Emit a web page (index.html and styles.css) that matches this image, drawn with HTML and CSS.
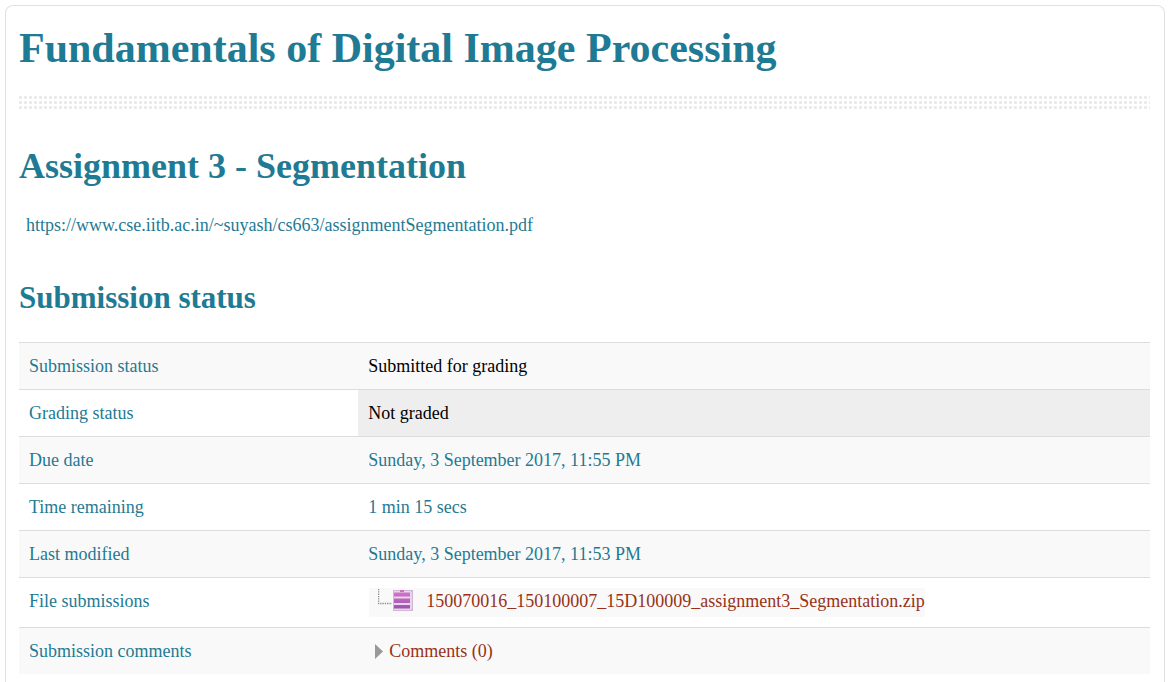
FILE: index.html
```html
<!DOCTYPE html>
<html lang="en">
<head>
<meta charset="utf-8">
<title>Assignment 3 - Segmentation</title>
<link rel="stylesheet" href="styles.css">
</head>
<body>
<main class="card">
  <h1 class="course-title">Fundamentals of Digital Image Processing</h1>
  <svg class="divider" aria-hidden="true">
    <defs>
      <pattern id="dots" width="5" height="5" patternUnits="userSpaceOnUse">
        <rect width="3" height="3" fill="#ededed"/>
        <rect x="1" y="1" width="1" height="1" fill="#e2e2e2"/>
      </pattern>
    </defs>
    <rect width="100%" height="100%" fill="url(#dots)"/>
  </svg>
  <h2 class="assignment-title">Assignment 3 - Segmentation</h2>
  <p class="intro"><a class="intro-link" href="https://www.cse.iitb.ac.in/~suyash/cs663/assignmentSegmentation.pdf">https://www.cse.iitb.ac.in/~suyash/cs663/assignmentSegmentation.pdf</a></p>
  <h3 class="status-title">Submission status</h3>
  <table class="status">
    <tbody>
      <tr><th scope="row">Submission status</th><td class="submitted">Submitted for grading</td></tr>
      <tr><th scope="row">Grading status</th><td class="not-graded">Not graded</td></tr>
      <tr><th scope="row">Due date</th><td>Sunday, 3 September 2017, 11:55 PM</td></tr>
      <tr><th scope="row">Time remaining</th><td>1 min 15 secs</td></tr>
      <tr><th scope="row">Last modified</th><td>Sunday, 3 September 2017, 11:53 PM</td></tr>
      <tr>
        <th scope="row">File submissions</th>
        <td>
          <div class="file">
            <svg class="file-icon" width="36" height="24" viewBox="0 0 36 24" aria-hidden="true">
              <path d="M.6 1v14.500H14" fill="none" stroke="#8c8c8c" stroke-width="1.300" stroke-dasharray="1.300 1"/>
              <defs>
                <linearGradient id="zip" gradientUnits="userSpaceOnUse" x1="0" y1="2" x2="0" y2="22">
                  <stop offset="0" stop-color="#dc78cc"/>
                  <stop offset="1" stop-color="#9450ac"/>
                </linearGradient>
              </defs>
              <rect x="15" y="2" width="20" height="21" fill="#d3b8d6"/>
              <rect x="16" y="3" width="17" height="19" fill="#ead6eb"/>
              <rect x="22" y="2" width="4" height="2" fill="#cc70bd"/>
              <path d="M16 4.500h16v4H16zM16 10.500h16v4.500H16zM16 17h16v3.500H16z" fill="url(#zip)"/>
              <path d="M33.500 4v17" stroke="#e4d2e6"/>
            </svg>
            <a class="action" href="#file">150070016_150100007_15D100009_assignment3_Segmentation.zip</a>
          </div>
        </td>
      </tr>
      <tr>
        <th scope="row">Submission comments</th>
        <td>
          <a class="action comments" href="#comments">
            <svg width="8" height="15" viewBox="0 0 8 15" aria-hidden="true"><path d="M0 0L8 7.500L0 15z" fill="#999"/></svg>
            Comments (0)
          </a>
        </td>
      </tr>
    </tbody>
  </table>
</main>
</body>
</html>
```
FILE: styles.css
```css
* {
  box-sizing: border-box;
}

body {
  margin: 0;
  padding: 5px 4px 0 5px;
  background: #fff;
  color: #1f7a94;
  font: 18px/26px "Liberation Serif", "Times New Roman", serif;
}

a {
  text-decoration: none;
}

.card {
  min-height: calc(100vh - 5px);
  padding: 16px 14px 8px 13px;
  border: 1px solid #e1e1e1;
  border-bottom: 0;
  border-radius: 8px 8px 0 0;
}

.course-title {
  margin: 0;
  font-size: 42px;
  line-height: 52px;
}

.divider {
  display: block;
  width: 100%;
  height: 13px;
  margin-top: 22px;
}

.assignment-title {
  margin: 35px 0 0;
  font-size: 36px;
  line-height: 44px;
}

.intro {
  margin: 24px 7px 0;
}

.intro-link {
  color: inherit;
}

.status-title {
  margin: 40px 0 0;
  font-size: 31px;
  line-height: 40px;
}

.status {
  width: 100%;
  margin-top: 24px;
  border-collapse: separate;
  border-spacing: 0;
}

.status th,
.status td {
  padding: 10px;
  border-top: 1px solid #ddd;
  font-weight: normal;
  text-align: left;
  vertical-align: top;
}

.status th {
  width: 30%;
}

.status tr:nth-child(odd) {
  background: #f9f9f9;
}

.status .submitted {
  color: #000;
}

.status .not-graded {
  background: #eee;
  color: #000;
}

.file {
  display: flex;
  gap: 12px;
  width: fit-content;
  height: 29px;
  margin-left: 1px;
  padding-left: 9px;
  background: #f9f9f9;
}

.action {
  color: #973217;
}

.comments {
  display: flex;
  align-items: center;
  gap: 6px;
  padding-left: 7px;
}
```
